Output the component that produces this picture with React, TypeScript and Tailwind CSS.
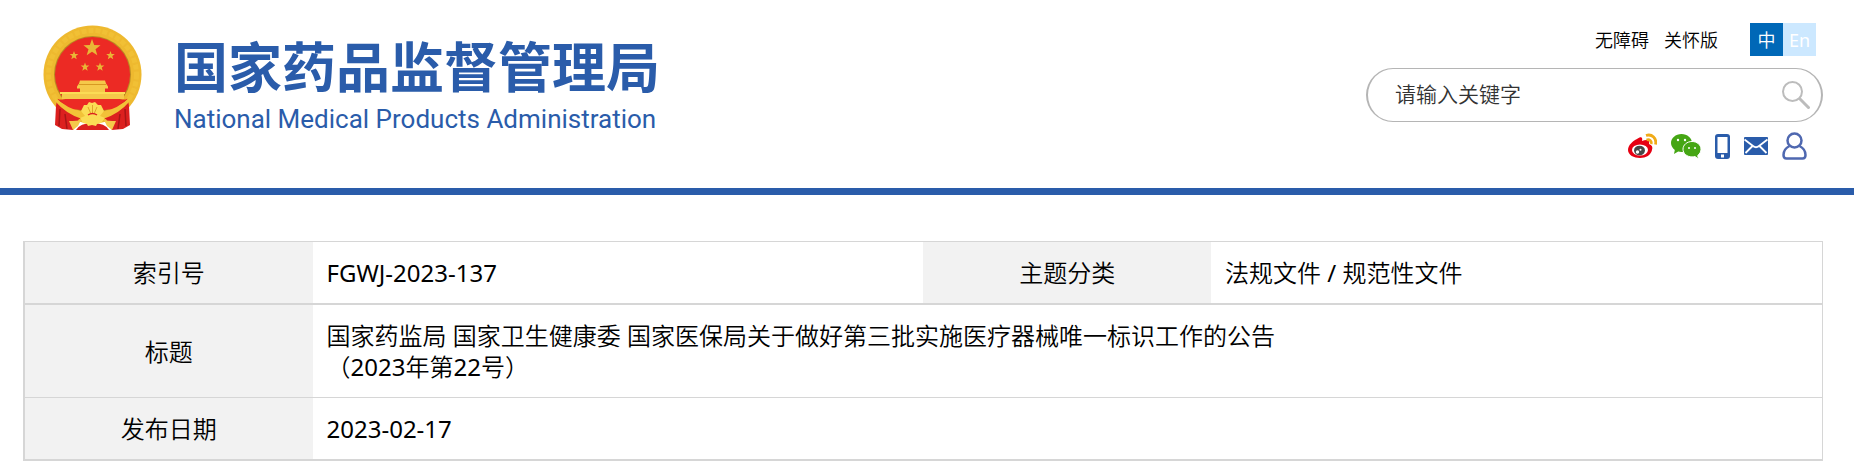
import type { ReactNode } from 'react'

/* ── Logo ───────────────────────────────────────────────────────── */

const STAR = 'M0,-10 2.4,-3.3 9.5,-3.1 3.9,1.3 5.9,8.1 0,4.1 -5.9,8.1 -3.9,1.3 -9.5,-3.1 -2.4,-3.3Z'

function Emblem() {
  return (
    <svg viewBox="0 0 100 106" className="h-[106px] w-[100px] shrink-0" aria-hidden="true">
      <circle cx="49.5" cy="49.500" r="49" fill="#eeb92f" />
      <circle cx="49.5" cy="49.500" r="44" fill="none" stroke="#f8cf45" strokeWidth="5" strokeDasharray="5 2" opacity="0.3" />
      <circle cx="49.5" cy="49.500" r="38.500" fill="#b98a22" />
      <circle cx="49.5" cy="49.500" r="37.500" fill="#ec2a24" />
      <g fill="#e9b636">
        <path d={STAR} transform="translate(49 23) scale(.9)" />
        <path d={STAR} transform="translate(31 30.5) scale(.46)" />
        <path d={STAR} transform="translate(67.5 30.5) scale(.46)" />
        <path d={STAR} transform="translate(42 42) scale(.46)" />
        <path d={STAR} transform="translate(57 42) scale(.46)" />
      </g>
      {/* gate tower */}
      <path d="M37 55.500h25l1 3 2 3v2H34v-2l2-3z" fill="#f5c94a" />
      <path d="M36 59h27v1H36z" fill="#d79a22" />
      <path d="M37 63h25v4h19v7H19v-7h18z" fill="#f5c94a" />
      <path d="M17 67h65v2H17z" fill="#fbdc55" />
      <path d="M14 74.500h71l-7 10H21z" fill="#ec2a24" />
      {/* drapes and wreath knot */}
      <path d="M15 74q-2 3-2 7l-1 19 7 4 11 1 6-11h27l6 11 11-1 7-4-1-19q0-4-2-7L66 88H33z" fill="#dc201f" />
      <path d="M17 84l-1 17M22 89l2 15M82 84l1 17M77 89l-2 15" stroke="#a81516" strokeWidth="1.500" fill="none" />
      <path d="M12 72q12 12 28 15h19q16-3 28-15v4q-11 13-27 18H39Q23 89 12 76z" fill="#f2c238" />
      <path d="M26 96q8 0 12-1l-3 6-5 4zM73 96q-8 0-12-1l3 6 5 4z" fill="#f5c94a" />
      <path d="M33 105q4-7 16.500-7T66 105z" fill="#dc201f" />
      <path d="M38 86l3-6 3 0 2-3 3 1 3-1 3 3 3 0 3 6-4 5H42z" fill="#fbdc55" />
      <path d="M37 93l5-2h15l5 2-4 5-4 1-1 2-4-1-4 1-1-2-4-1z" fill="#fbdc55" />
      <path d="M49.500 80v8M45 82l3 7M54 82l-3 7" stroke="#e0a52a" strokeWidth="1" />
      <path d="M45 90q4.500-3 9 0" fill="none" stroke="#dc201f" strokeWidth="1.500" />
    </svg>
  )
}

function Logo() {
  return (
    <a href="#" className="flex items-start gap-[31px] text-[#2a5caa]">
      <Emblem />
      <span className="flex flex-col gap-1.5 pt-2">
        <span className="font-['Noto_Sans_CJK_SC',sans-serif] text-[54px] leading-[64px] font-bold">
          国家药品监督管理局
        </span>
        <span className="font-['Roboto',sans-serif] text-[26px] leading-8">
          National Medical Products Administration
        </span>
      </span>
    </a>
  )
}

/* ── Header icons ───────────────────────────────────────────────── */

function IconLink({ label, children }: { label: string; children: ReactNode }) {
  return (
    <a href="#" aria-label={label} className="flex items-center">
      {children}
    </a>
  )
}

function WeiboIcon() {
  return (
    <svg viewBox="0 0 30 26" className="h-[26px] w-[30px]">
      <path
        d="M10 6c4-3 6-2 5 2 5-2 8-1 7 3 3 1 4 3 3 6-1 5-6 8-12 8S1 22 1 17C1 12 6 8 10 6z"
        fill="#e60012"
      />
      <ellipse cx="13" cy="17" rx="8" ry="5.500" fill="#fff" />
      <ellipse cx="12.500" cy="17.500" rx="5.500" ry="4.800" fill="#484848" />
      <circle cx="10.500" cy="19" r="1.700" fill="#fff" />
      <circle cx="13.500" cy="16.800" r="1" fill="#fff" />
      <path d="M19 2.500c6-2 11 3 9.500 9M19.500 7c3-1 5.500 1 4.500 4" fill="none" stroke="#f0ab18" strokeWidth="2.800" />
    </svg>
  )
}

function WechatIcon() {
  return (
    <svg viewBox="0 0 30 25" className="h-[25px] w-[30px]">
      <path
        d="M10.500 0C4.700 0 0 4 0 9c0 2.800 1.500 5.200 3.800 6.900L3 20l4.200-2.600c1 .3 2.200.5 3.300.5C16.300 17.900 21 14 21 9S16.300 0 10.500 0z"
        fill="#45a614"
      />
      <path
        d="M21 7.500c-5 0-9 3.400-9 7.700s4 7.700 9 7.700c1 0 2-.1 2.900-.4L27.500 25l-.8-3.500C28.700 20 30 17.800 30 15.200c0-4.300-4-7.700-9-7.700z"
        fill="#45a614"
        stroke="#fff"
        strokeWidth="1"
      />
      <g fill="#fff">
        <circle cx="7" cy="6" r="1.200" />
        <circle cx="14" cy="6" r="1.200" />
        <circle cx="18" cy="14" r="1" />
        <circle cx="24" cy="14" r="1" />
      </g>
    </svg>
  )
}

function PhoneIcon() {
  return (
    <svg viewBox="0 0 15 25" className="h-[25px] w-[15px]">
      <rect width="15" height="25" rx="3" fill="#2a5caa" />
      <rect x="2.500" y="3" width="10" height="16" fill="#fff" />
      <rect x="6" y="20.500" width="3" height="3" fill="#fff" />
    </svg>
  )
}

function MailIcon() {
  return (
    <svg viewBox="0 0 24 18" className="h-[18px] w-6">
      <rect width="24" height="18" rx="1" fill="#2a5caa" />
      <path d="M.5 2.500L9 9q3 2.500 6 0l8.500-6.500M1.500 16l7-7M22.500 16l-7-7" fill="none" stroke="#fff" strokeWidth="1.800" />
    </svg>
  )
}

function UserIcon() {
  return (
    <svg viewBox="0 0 25 28" className="h-7 w-[25px]" fill="none" stroke="#4f68b0" strokeWidth="2.500">
      <circle cx="12.500" cy="8.500" r="7" />
      <path d="M7.500 14C3.500 16 1.500 19.500 1.500 23c0 2.500 1 3.500 3 3.500h16c2 0 3-1 3-3.500 0-3.500-2-7-6-9" />
    </svg>
  )
}

/* ── Header ─────────────────────────────────────────────────────── */

function SearchBox() {
  return (
    <form
      role="search"
      onSubmit={(e) => e.preventDefault()}
      className="flex h-[54px] w-[457px] items-center rounded-full border border-x-2 border-[#b5b5b5] pr-[11px] pl-[27px]"
    >
      <input
        type="text"
        aria-label="请输入关键字"
        placeholder="请输入关键字"
        className="min-w-0 flex-1 text-[21px] text-[#333] outline-none placeholder:text-[#333]"
      />
      <button type="submit" aria-label="搜索">
        <svg viewBox="0 0 28 28" className="size-7" fill="none" stroke="#bcbcbc">
          <circle cx="10.500" cy="10.500" r="9.500" strokeWidth="2" />
          <path d="M17.500 17.500l10 10" strokeWidth="3" />
        </svg>
      </button>
    </form>
  )
}

function Header() {
  return (
    <header className="flex h-[195px] items-start justify-between border-b-[7px] border-[#2a5caa] pr-[31px] pl-[43px]">
      <div className="pt-[25px]">
        <Logo />
      </div>
      <div className="flex flex-col items-end pt-[23px]">
        <div className="flex items-center pr-[7px] text-lg">
          <nav className="flex gap-[15px] pr-8">
            <a href="#">无障碍</a>
            <a href="#">关怀版</a>
          </nav>
          <a href="#" className="flex size-[33px] items-center justify-center bg-[#0068b7] text-white">
            中
          </a>
          <a href="#" className="flex size-[33px] items-center justify-center bg-[#cce8ff] text-white">
            En
          </a>
        </div>
        <div className="pt-3">
          <SearchBox />
        </div>
        <div className="flex items-center gap-[14px] pt-[10px] pr-4">
          <IconLink label="微博"><WeiboIcon /></IconLink>
          <IconLink label="微信"><WechatIcon /></IconLink>
          <IconLink label="移动客户端"><PhoneIcon /></IconLink>
          <IconLink label="邮箱"><MailIcon /></IconLink>
          <IconLink label="个人中心"><UserIcon /></IconLink>
        </div>
      </div>
    </header>
  )
}

/* ── Document info table ────────────────────────────────────────── */

function Label({ children }: { children: ReactNode }) {
  return (
    <th scope="row" className="bg-[#f2f2f2] py-[15px] text-center font-normal">
      {children}
    </th>
  )
}

function Value({ colSpan, children }: { colSpan?: number; children: ReactNode }) {
  return (
    <td colSpan={colSpan} className="px-[14px] py-[15px]">
      {children}
    </td>
  )
}

function InfoTable() {
  return (
    <div className="mt-[46px] mr-[31px] ml-[23px] border-t border-r border-b-2 border-l-2 border-[#d6d6d6]">
      <table className="w-full table-fixed border-collapse text-2xl leading-[31px]">
        <colgroup>
          <col className="w-[16%]" />
          <col className="w-[34%]" />
          <col className="w-[16%]" />
          <col className="w-[34%]" />
        </colgroup>
        <tbody>
          <tr className="border-b-2 border-[#d6d6d6]">
            <Label>索引号</Label>
            <Value>FGWJ-2023-137</Value>
            <Label>主题分类</Label>
            <Value>法规文件 / 规范性文件</Value>
          </tr>
          <tr className="border-b border-[#d6d6d6]">
            <Label>标题</Label>
            <Value colSpan={3}>
              国家药监局 国家卫生健康委 国家医保局关于做好第三批实施医疗器械唯一标识工作的公告
              <br />
              （2023年第22号）
            </Value>
          </tr>
          <tr>
            <Label>发布日期</Label>
            <Value colSpan={3}>2023-02-17</Value>
          </tr>
        </tbody>
      </table>
    </div>
  )
}

export default function App() {
  return (
    <div
      lang="zh-CN"
      className="bg-white font-['Noto_Sans','Noto_Sans_CJK_SC_DemiLight','Noto_Sans_CJK_SC',sans-serif] text-black"
    >
      <Header />
      <main>
        <InfoTable />
      </main>
    </div>
  )
}
